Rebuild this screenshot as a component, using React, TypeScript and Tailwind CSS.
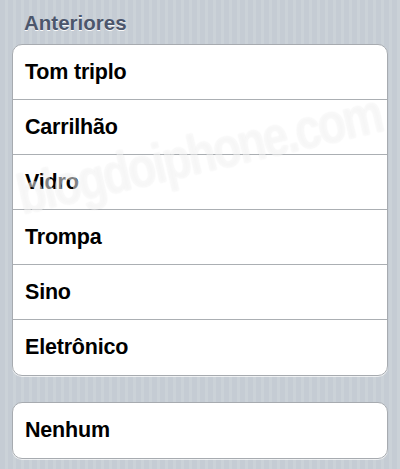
const sounds = ['Tom triplo', 'Carrilhão', 'Vidro', 'Trompa', 'Sino', 'Eletrônico'];

function Row({ label, last }: { label: string; last?: boolean }) {
    return (
        <div className={`h-[55px] flex items-center pl-[12px] text-[21.5px] font-bold text-black tracking-[-0.2px] ${last ? 'h-[54px]' : 'border-b border-[#abafb3]'}`}>
            {label}
        </div>
    );
}

export default function App() {
    return (
        <div
            className="relative w-[400px] h-[469px] overflow-hidden bg-[repeating-linear-gradient(90deg,#c5ccd4_0px,#c5ccd4_5px,#cbd2d8_5px,#cbd2d8_8px)]"
            style={{ fontFamily: '"Liberation Sans", Arial, sans-serif' }}
        >
            { /* Section header */}
            <div className="pt-[8px] pl-[24px] h-[44px] text-[20.5px] font-bold text-[#4c566c] [text-shadow:0_1px_0_rgba(255,255,255,0.9)]">
                Anteriores
            </div>
            { /* First group */}
            <div className="mx-[12px] bg-white border border-[#a7abb0] rounded-[10px] overflow-hidden shadow-[0_1px_0_rgba(255,255,255,0.7)]">
                {sounds.map((s, i) => (
                    <Row key={s} label={s} last={i === sounds.length - 1} />
                ))}
            </div>
            { /* Second group */}
            <div className="mx-[12px] mt-[26px] bg-white border border-[#a7abb0] rounded-[10px] overflow-hidden shadow-[0_1px_0_rgba(255,255,255,0.7)]">
                <Row label="Nenhum" last />
            </div>
            { /* Watermark */}
            <div className="absolute left-[18px] top-[168px] -rotate-[13deg] scale-x-[0.82] origin-left text-[56px] leading-none font-bold tracking-[-3px] text-white/50 [text-shadow:0_0_2px_rgba(0,0,0,0.07)] pointer-events-none select-none whitespace-nowrap">
                blogdoiphone.com
            </div>
        </div>
    );
}
